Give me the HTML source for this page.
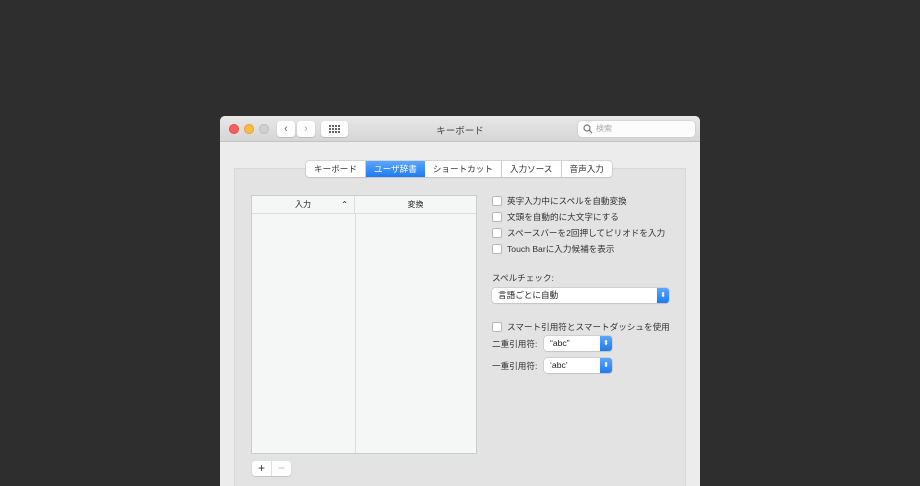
<!DOCTYPE html>
<html><head><meta charset="utf-8"><style>
*{box-sizing:border-box;margin:0;padding:0}
body{width:920px;height:480px;background:#2e2e2e;position:relative;overflow:hidden;font-family:"Liberation Sans","Noto Sans CJK JP",sans-serif;color:#222}
.win{position:absolute;left:220px;top:116px;width:480px;height:370px;background:#ececec;border-radius:5px 5px 0 0;overflow:hidden}
.tb{height:26px;background:linear-gradient(#e8e8e8,#d6d6d6);border-bottom:1px solid #c4c4c4;position:relative}
.dot{position:absolute;top:8px;width:10px;height:10px;border-radius:50%}
.btn{position:absolute;top:5px;height:16px;background:#fdfdfd;border-radius:3px;box-shadow:0 0.5px 1px rgba(0,0,0,.25);font-size:11px;color:#666;text-align:center;line-height:16px}
.title{position:absolute;left:0;right:0;top:7px;text-align:center;font-size:9.5px;color:#444}
.search{position:absolute;left:358px;top:5px;width:117px;height:16px;background:#fcfcfc;border-radius:4px;box-shadow:0 0 0 .5px #c8c8c8;font-size:8px;color:#aaa;line-height:16px;padding-left:18px}
.inner{position:absolute;left:14px;top:52px;width:452px;height:330px;background:#e3e3e3;border:1px solid #d8d8d8}
.tabs{position:absolute;left:86px;top:45px;height:16px;display:flex;background:#fff;border-radius:3px;box-shadow:0 0 0 .5px #bbb,0 1px 1px rgba(0,0,0,.1);font-size:8.6px;line-height:16px;overflow:hidden}
.tabs div{padding:0 8px;border-right:1px solid #ccc;color:#333}
.tabs .a{background:linear-gradient(#5aa6fb,#1f7bf2);color:#fff;border:none}
.tbl{position:absolute;left:31px;top:79px;width:226px;height:259px;background:#f5f6f6;border:1px solid #ccc}
.th{height:18px;border-bottom:1px solid #ddd;font-size:8px;line-height:18px;display:flex}
.cb{position:absolute;left:272px;font-size:8.6px;color:#333;display:flex;align-items:center}
.cb i{width:10px;height:10px;background:#fff;border:1px solid #b8b8b8;border-radius:2px;margin-right:5px}
.sel{position:absolute;background:#fff;border-radius:3px;box-shadow:0 0 0 .5px #bbb,0 1px 1px rgba(0,0,0,.1);font-size:8.6px;line-height:15px;padding-left:6px;height:15px}
.sel b{position:absolute;right:0;top:0;width:12px;height:15px;background:linear-gradient(#5aa6fb,#1f7bf2);border-radius:0 3px 3px 0;color:#fff;font-size:7px;line-height:15px;text-align:center;font-weight:normal}
</style></head><body>
<div class="win">
 <div class="tb">
  <div class="dot" style="left:9px;background:#fc605c;border:.5px solid #de4a46"></div>
  <div class="dot" style="left:24px;background:#fdbc40;border:.5px solid #dea235"></div>
  <div class="dot" style="left:39px;background:#d0d0d0;border:.5px solid #bbb"></div>
  <div class="btn" style="left:57px;width:18px">&#8249;</div>
  <div class="btn" style="left:77px;width:18px;color:#aaa">&#8250;</div>
  <div class="btn" style="left:101px;width:27px"><svg width="12" height="8" style="margin-top:4px"><g fill="#666"><rect x="0" y="0" width="2" height="2"/><rect x="3" y="0" width="2" height="2"/><rect x="6" y="0" width="2" height="2"/><rect x="9" y="0" width="2" height="2"/><rect x="0" y="3" width="2" height="2"/><rect x="3" y="3" width="2" height="2"/><rect x="6" y="3" width="2" height="2"/><rect x="9" y="3" width="2" height="2"/><rect x="0" y="6" width="2" height="2"/><rect x="3" y="6" width="2" height="2"/><rect x="6" y="6" width="2" height="2"/><rect x="9" y="6" width="2" height="2"/></g></svg></div>
  <div class="title">キーボード</div>
  <div class="search"><svg style="position:absolute;left:5px;top:3px" width="10" height="10"><circle cx="4" cy="4" r="3" fill="none" stroke="#777" stroke-width="1.2"/><line x1="6.3" y1="6.3" x2="9" y2="9" stroke="#777" stroke-width="1.2"/></svg>検索</div>
 </div>
 <div class="inner"></div>
 <div class="tabs"><div>キーボード</div><div class="a">ユーザ辞書</div><div>ショートカット</div><div>入力ソース</div><div style="border:none">音声入力</div></div>
 <div class="tbl">
  <div class="th"><div style="width:103px;border-right:1px solid #ddd;text-align:center;position:relative">入力<span style="position:absolute;right:6px">⌃</span></div><div style="flex:1;text-align:center">変換</div></div>
  <div style="position:absolute;left:103px;top:18px;bottom:0;border-left:1px solid #ddd"></div>
 </div>
 <div class="cb" style="top:79px"><i></i>英字入力中にスペルを自動変換</div>
 <div class="cb" style="top:95px"><i></i>文頭を自動的に大文字にする</div>
 <div class="cb" style="top:111px"><i></i>スペースバーを2回押してピリオドを入力</div>
 <div class="cb" style="top:127px"><i></i>Touch Barに入力候補を表示</div>
 <div class="cb" style="top:156px">スペルチェック:</div>
 <div class="sel" style="left:272px;top:172px;width:177px">言語ごとに自動<b>⬍</b></div>
 <div class="cb" style="top:205px"><i></i>スマート引用符とスマートダッシュを使用</div>
 <div class="cb" style="top:222px">二重引用符:</div>
 <div class="sel" style="left:324px;top:220px;width:68px">“abc”<b>⬍</b></div>
 <div class="cb" style="top:244px">一重引用符:</div>
 <div class="sel" style="left:324px;top:242px;width:68px">‘abc’<b>⬍</b></div>
 <div class="btn" style="left:32px;top:345px;width:39px;height:15px;display:flex;color:#333;font-size:12px;line-height:15px"><span style="width:20px;border-right:1px solid #ddd">+</span><span style="flex:1;color:#bbb">−</span></div>
</div>
</body></html>
